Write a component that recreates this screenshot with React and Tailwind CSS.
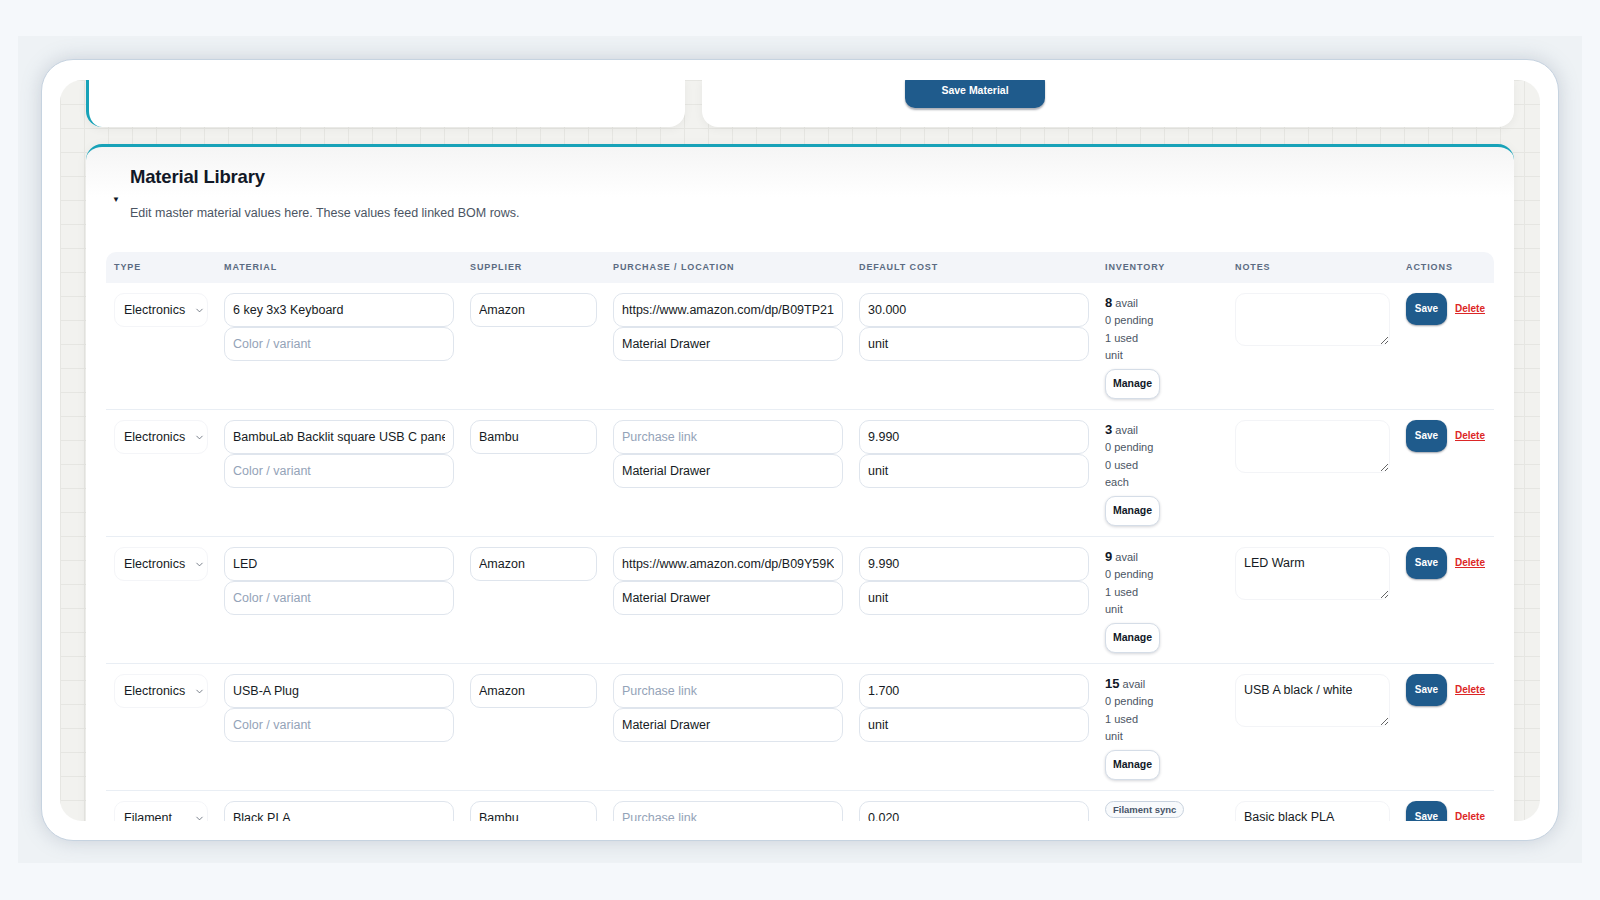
import { ChevronDown } from "lucide-react";

const materials = [
  {
    type: "Electronics",
    name: "6 key 3x3 Keyboard",
    supplier: "Amazon",
    link: "https://www.amazon.com/dp/B09TP21V5L",
    location: "Material Drawer",
    cost: "30.000",
    unit: "unit",
    avail: 8,
    pending: 0,
    used: 1,
    per: "unit",
    notes: "",
  },
  {
    type: "Electronics",
    name: "BambuLab Backlit square USB C panel",
    supplier: "Bambu",
    link: "",
    location: "Material Drawer",
    cost: "9.990",
    unit: "unit",
    avail: 3,
    pending: 0,
    used: 0,
    per: "each",
    notes: "",
  },
  {
    type: "Electronics",
    name: "LED",
    supplier: "Amazon",
    link: "https://www.amazon.com/dp/B09Y59KQ2M",
    location: "Material Drawer",
    cost: "9.990",
    unit: "unit",
    avail: 9,
    pending: 0,
    used: 1,
    per: "unit",
    notes: "LED Warm",
  },
  {
    type: "Electronics",
    name: "USB-A Plug",
    supplier: "Amazon",
    link: "",
    location: "Material Drawer",
    cost: "1.700",
    unit: "unit",
    avail: 15,
    pending: 0,
    used: 1,
    per: "unit",
    notes: "USB A black / white",
  },
  {
    type: "Filament",
    name: "Black PLA",
    supplier: "Bambu",
    link: "",
    location: "AMS Slot 1",
    cost: "0.020",
    unit: "g",
    filament: true,
    avail: 820,
    pending: 0,
    used: 180,
    per: "g",
    notes: "Basic black PLA",
  },
];

const headers = [
  "Type",
  "Material",
  "Supplier",
  "Purchase / Location",
  "Default cost",
  "Inventory",
  "Notes",
  "Actions",
];

const cols =
  "grid grid-cols-[110px_246px_143px_246px_246px_130px_171px_96px]";

// plain input used by every editable cell
const Field = ({ value, placeholder }) => (
  <input
    readOnly
    value={value}
    placeholder={placeholder}
    className="block h-[34px] w-full rounded-[10px] border border-[#dfe5ed] bg-white px-2 pt-[1px] text-[12.5px] text-[#161b24] outline-none placeholder:text-[#94a3b8]"
  />
);

const Row = ({ m }) => (
  <div className={`${cols} items-start border-b border-[#e9eef4] py-[10px]`}>
    <div className="px-2">
      <div className="flex h-[34px] items-center justify-between rounded-[10px] border border-[#f4f5f8] bg-white pl-[9px] pr-[2px] pt-[1px] text-[12.5px] text-[#161b24]">
        <span>{m.type}</span>
        <ChevronDown size={11} strokeWidth={1.6} className="text-[#4b5563]" />
      </div>
    </div>
    <div className="px-2">
      <Field value={m.name} />
      <Field value="" placeholder="Color / variant" />
    </div>
    <div className="px-2">
      <Field value={m.supplier} />
    </div>
    <div className="px-2">
      <Field value={m.link} placeholder="Purchase link" />
      <Field value={m.location} />
    </div>
    <div className="px-2">
      <Field value={m.cost} />
      <Field value={m.unit} />
    </div>
    <div className="px-2 text-[11px] leading-[17.5px] text-[#4b5563]">
      {m.filament ? (
        <div className="mb-1 inline-flex h-[17px] items-center rounded-full border border-[#c9d3df] bg-[#f8fafc] px-[7px] text-[9.5px] font-bold text-[#475569]">
          Filament sync
        </div>
      ) : null}
      <div className="pt-[1px]">
        <span className="text-[13px] font-bold text-[#111827]">{m.avail}</span>{" "}
        avail
      </div>
      <div>{m.pending} pending</div>
      <div>{m.used} used</div>
      <div>{m.per}</div>
      <button className="mt-[4px] block h-[30px] w-[55px] rounded-[10px] border border-[#d5dde7] bg-white text-[10.5px] font-bold text-[#111827] shadow-[0_1px_3px_rgba(15,23,42,0.18)]">
        Manage
      </button>
    </div>
    <div className="px-2">
      <textarea
        readOnly
        value={m.notes}
        className="block h-[53px] w-full rounded-[10px] border border-[#f3f4f7] bg-white px-2 py-[6px] text-[12.5px] leading-[18px] text-[#161b24] outline-none"
      />
    </div>
    <div className="flex items-center gap-[8px] px-2">
      <button className="h-[32px] w-[41px] rounded-[10px] bg-[#1f5b8c] text-[10px] font-bold text-white shadow-[0_1px_2px_rgba(15,23,42,0.4)]">
        Save
      </button>
      <a className="text-[10px] font-bold text-[#dc2626] underline">Delete</a>
    </div>
  </div>
);

export default function App() {
  return (
    <div className="h-screen w-full overflow-hidden bg-[#f5f8fb] pl-[18px] pt-[36px] font-['Liberation_Sans',Arial,sans-serif]">
      <div className="h-[827px] w-[1564px] bg-[#eef2f5] p-[23px]">
        <div className="h-[782px] w-[1518px] rounded-[32px] border border-[#c6d3e0] bg-white pb-[19px] pl-[18px] pr-[18px] pt-[20px] shadow-[0_0_20px_rgba(100,116,139,0.28)]">
          <div className="h-full overflow-hidden rounded-[22px] bg-[#f2f2ef] bg-[linear-gradient(#e6e6e2_1px,transparent_1px),linear-gradient(90deg,#e6e6e2_1px,transparent_1px)] bg-[size:24px_24px] px-[26px]">
            {/* top cards, scrolled mostly out of view */}
            <div className="flex h-[47px] gap-[17px]">
              <div className="w-[599px] rounded-b-[16px] border-l-[3px] border-[#17a2b8] bg-white shadow-[0_2px_10px_rgba(0,0,0,0.05)]" />
              <div className="flex-1 rounded-b-[16px] bg-white shadow-[0_2px_10px_rgba(0,0,0,0.05)]">
                <button className="-mt-[8px] ml-[203px] block h-[36px] w-[140px] rounded-[10px] bg-[#1f5b8c] pt-[1px] text-[10.5px] font-bold text-white shadow-[0_2px_2px_rgba(15,23,42,0.35)]">
                  Save Material
                </button>
              </div>
            </div>

            <div className="mt-[17px] rounded-t-[16px] border-t-[3px] border-[#17a2b8] bg-[linear-gradient(to_bottom,#f5f5f5,#ffffff_50px)] px-[20px] shadow-[0_2px_12px_rgba(0,0,0,0.05)]">
              <div className="flex items-start pl-[6px] pt-[18px]">
                <span className="mt-[30px] w-[18px] text-[8px] leading-[10px] text-[#111827]">
                  ▼
                </span>
                <div>
                  <h2 className="text-[18.5px] font-bold leading-[24px] tracking-[-0.01em] text-[#111827]">
                    Material Library
                  </h2>
                  <p className="mt-[14.5px] text-[12.5px] leading-[18px] text-[#4b5563]">
                    Edit master material values here. These values feed linked
                    BOM rows.
                  </p>
                </div>
              </div>

              <div className="mt-[30px]">
                <div
                  className={`${cols} h-[31px] items-center rounded-t-[10px] bg-[#f3f5f9] pt-[2px]`}
                >
                  {headers.map((h) => (
                    <div
                      key={h}
                      className="px-2 text-[9px] font-bold uppercase tracking-[0.1em] text-[#5b6b82]"
                    >
                      {h}
                    </div>
                  ))}
                </div>
                {materials.map((m) => (
                  <Row key={m.name} m={m} />
                ))}
              </div>
            </div>
          </div>
        </div>
      </div>
    </div>
  );
}
